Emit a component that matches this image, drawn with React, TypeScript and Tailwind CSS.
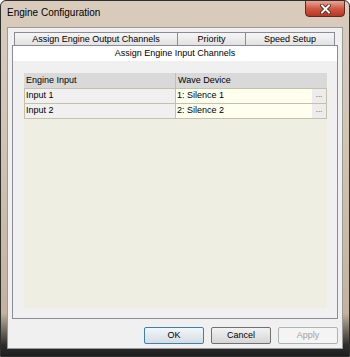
import React from 'react';

const font = { fontFamily: '"Liberation Sans", Arial, sans-serif' };

const rows = [
  { input: 'Input 1', device: '1: Silence 1' },
  { input: 'Input 2', device: '2: Silence 2' },
];

function Tab({ label, width }: { label: string; width: string }) {
  return (
    <div
      className={`${width} h-[14px] border border-[#898c95] -ml-px first:ml-0 bg-gradient-to-b from-[#f5f5f5] to-[#e2e2e2] flex items-start justify-center pt-[1px] text-[9px] leading-[11px] text-black`}
    >
      {label}
    </div>
  );
}

function DialogButton({ label, variant }: { label: string; variant: 'default' | 'normal' | 'disabled' }) {
  const styles = {
    default: 'border-[#3c7fb1] bg-gradient-to-b from-[#f2f6f9] to-[#d4dde4] text-black',
    normal: 'border-[#707070] bg-gradient-to-b from-[#f2f2f2] to-[#d6d6d6] text-black',
    disabled: 'border-[#adb2b5] bg-[#f4f4f4] text-[#a0a0a0]',
  }[variant];
  return (
    <div className={`w-[60px] h-[17px] rounded-[2px] border flex items-center justify-center text-[9px] ${styles}`}>
      {label}
    </div>
  );
}

export default function App() {
  return (
    <div
      style={font}
      className="w-[350px] h-[357px] flex flex-col border border-[#2f2f2f] rounded-t-[6px] bg-[linear-gradient(to_bottom,#d9ccbd_0%,#d2c3b2_40%,#c4b29f_88%,#2c2c2c_97%,#1e1e1e_100%)] overflow-hidden"
    >
      {/* title bar */}
      <div className="h-[26px] flex justify-between items-start pl-[6px] pr-[4px]">
        <div className="text-[10px] leading-none text-black mt-[7px]">Engine Configuration</div>
        <div className="w-[40px] h-[17px] -mt-px rounded-b-[4px] border border-[#5c2a22] bg-gradient-to-b from-[#e8a594] via-[#cf5a43] to-[#b8361f] flex items-center justify-center">
          <svg width="11" height="10" viewBox="0 0 11 10">
            <path d="M2 1.5 L9 8.5 M9 1.5 L2 8.5" stroke="#3b1a14" strokeWidth="3.6" strokeLinecap="square" />
            <path d="M2 1.5 L9 8.5 M9 1.5 L2 8.5" stroke="#ffffff" strokeWidth="2" strokeLinecap="square" />
          </svg>
        </div>
      </div>

      {/* client area */}
      <div className="flex-1 mx-[6px] mb-[7px] border border-[#9a9a9a] bg-[#f0f0f0] flex flex-col">
        <div className="ml-[4px] mt-[4px] w-[326px] flex flex-col">
          <div className="flex pl-[2px]">
            <Tab label="Assign Engine Output Channels" width="w-[164px]" />
            <Tab label="Priority" width="w-[69px]" />
            <Tab label="Speed Setup" width="w-[90px]" />
          </div>
          <div className="-mt-px h-[16px] border border-b-0 border-[#898c95] bg-white flex items-start justify-center pt-[2px] text-[9px] leading-[11px] text-black">
            Assign Engine Input Channels
          </div>
          <div className="w-[326px] h-[258px] border border-t-0 border-[#898c95] bg-[#f0f0f0] pl-[11px] pr-[10px] pt-[12px] pb-[10px]">
            <div className="w-full h-full bg-[#eeeee2] text-[9px] text-black">
              <div className="flex h-[16px] bg-[#d9d9d9] border-b border-[#c4c2a6]">
                <div className="w-[152px] border-r border-[#c4c2a6] pl-[2px] flex items-center">Engine Input</div>
                <div className="flex-1 pl-[2px] flex items-center">Wave Device</div>
              </div>
              {rows.map((r) => (
                <div key={r.input} className="flex h-[15px] border-b border-x border-[#c4c2a6]">
                  <div className="w-[151px] bg-[#f0f0f0] border-r border-[#c4c2a6] pl-[1px] flex items-center">{r.input}</div>
                  <div className="flex-1 bg-[#fffff0] pl-[1px] flex items-center">{r.device}</div>
                  <div className="w-[14px] bg-[#ececec] flex items-center justify-center text-[#444] text-[8px] leading-none pb-[2px]">...</div>
                </div>
              ))}
            </div>
          </div>
        </div>

        <div className="flex justify-end gap-[7px] pr-[4px] mt-[8px]">
          <DialogButton label="OK" variant="default" />
          <DialogButton label="Cancel" variant="normal" />
          <DialogButton label="Apply" variant="disabled" />
        </div>
      </div>
    </div>
  );
}
